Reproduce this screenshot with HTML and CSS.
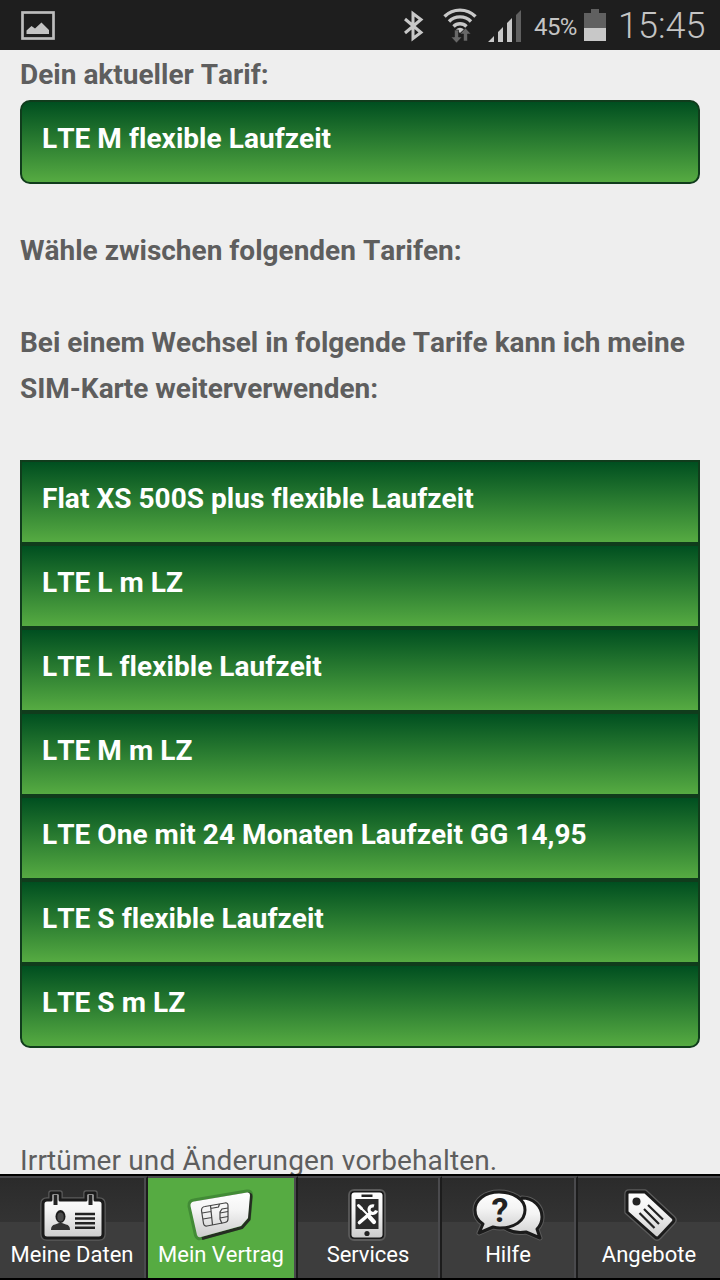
FILE: index.html
```html
<!DOCTYPE html>
<html lang="de">
<head>
    <meta charset="UTF-8">
    <meta name="viewport" content="width=device-width, initial-scale=1.0">
    <title>Mein Vertrag</title>
    <link rel="stylesheet" href="styles.css">
</head>
<body>

    <header class="statusbar">
        <svg class="gallery" width="34" height="29" viewBox="0 0 34 29">
            <rect x="1.5" y="1.5" width="31" height="26" fill="none" stroke="#bdbdbd" stroke-width="2.700"/>
            <path d="M5.500 23v-3.500l5-4.500 3.500 2.500 6.500-6L28 19v4z" fill="#c4c4c4"/>
        </svg>
        <svg class="bluetooth" width="20" height="30" viewBox="0 0 20 30">
            <path d="M1 8l16 13.500-8 6V2.500l8 6L1 22" fill="none" stroke="#c8c8c8" stroke-width="3"/>
        </svg>
        <svg class="wifi" width="34" height="36" viewBox="0 0 34 36">
            <g fill="none" stroke="#c8c8c8" stroke-width="3.400">
                <path d="M1.500 8.500a22 22 0 0 1 31 0"/>
                <path d="M6 13.500a15.500 15.500 0 0 1 22 0"/>
                <path d="M10.500 18.500a9.200 9.200 0 0 1 13 0"/>
            </g>
            <path d="M13 21.500a5.500 5.500 0 0 1 8 0L17 25z" fill="#c8c8c8"/>
            <path d="M11.500 22h4v7h3.500l-5.500 6-5.500-6h3.500z M20.500 33v-7H17l5.500-6 5.500 6h-3.500v7z" fill="#686868" stroke="#1e1e1e" stroke-width="0.600"/>
        </svg>
        <svg class="signal" width="34" height="33" viewBox="0 0 34 33">
            <path d="M0 32l6-6v6z M10 32V22l5-5v15z M19 32V13l5-5v24z" fill="#c8c8c8"/>
            <path d="M28 32V5l5-5v32z" fill="#606060"/>
        </svg>
        <span class="percent">45%</span>
        <svg class="battery" width="22" height="32" viewBox="0 0 22 32">
            <path d="M0 19V4h7V0h8v4h7v15z" fill="#606060"/>
            <rect y="19" width="22" height="13" fill="#c8c8c8"/>
        </svg>
        <span class="clock">15:45</span>
    </header>

    <main class="content">
        <p class="label">Dein aktueller Tarif:</p>
        <div class="tarif current">LTE M flexible Laufzeit</div>

        <p class="label choose">Wähle zwischen folgenden Tarifen:</p>
        <p class="label simcard">Bei einem Wechsel in folgende Tarife kann ich meine SIM-Karte weiterverwenden:</p>

        <ul class="tarife">
            <li class="tarif">Flat XS 500S plus flexible Laufzeit</li>
            <li class="tarif">LTE L m LZ</li>
            <li class="tarif">LTE L flexible Laufzeit</li>
            <li class="tarif">LTE M m LZ</li>
            <li class="tarif">LTE One mit 24 Monaten Laufzeit GG 14,95</li>
            <li class="tarif">LTE S flexible Laufzeit</li>
            <li class="tarif">LTE S m LZ</li>
        </ul>

        <p class="note">Irrtümer und Änderungen vorbehalten.</p>
    </main>

    <nav class="tabs">
        <a class="tab">
            <svg class="card" width="72" height="56" viewBox="0 0 72 56">
                <defs>
                    <linearGradient id="silver" x1="0" y1="0" x2="0" y2="1">
                        <stop offset="0" stop-color="#ffffff"/>
                        <stop offset="0.400" stop-color="#f4f4f4"/>
                        <stop offset="1" stop-color="#cccccc"/>
                    </linearGradient>
                </defs>
                <path d="M8 12h4V5h9v7h26V5h9v7h4q4 0 4 4v30q0 4-4 4H8q-4 0-4-4V16q0-4 4-4z" fill="none" stroke="#5b5b5b" stroke-width="5.500" stroke-linejoin="round"/>
                <path d="M8 12h4V5h9v7h26V5h9v7h4q4 0 4 4v30q0 4-4 4H8q-4 0-4-4V16q0-4 4-4z" fill="url(#silver)" stroke="#1b1b1b" stroke-width="3"  stroke-linejoin="round"/>
                <path d="M14.500 7h4v10h-4z M49.500 7h4v10h-4z" fill="#222"/>
                <ellipse cx="21.500" cy="28.500" rx="5" ry="6.500" fill="#1b1b1b"/>
                <ellipse cx="21.500" cy="29" rx="3.200" ry="4.600" fill="#4a4a4a"/>
                <path d="M12 42q0-5 4-5.500l4-1.500h3l4 1.500q4 .5 4 5.500z" fill="#333"/>
                <path d="M36 26h20M36 30.500h20M36 35.200h20M36 39.800h20" stroke="#222" stroke-width="2.400"/>
            </svg>
            Meine Daten
        </a>
        <a class="tab active">
            <svg class="sim" width="72" height="56" viewBox="0 0 72 56">
                <path d="M8 13.500L61 4.500q3-.5 3 2.500l-2 23-7 8-40 11q-3 1-4-2L4.500 18q-.5-4 3.500-4.500z" fill="none" stroke="#428b36" stroke-width="6" stroke-linejoin="round"/>
                <path d="M9 15L62 6q3-.5 3 2.500l-2 23-7 8-40 11" fill="none" stroke="#252d22" stroke-width="3" stroke-linejoin="round"/>
                <path d="M8 13.500L61 4.500q3-.5 3 2.500l-2 23-7 8-40 11q-3 1-4-2L4.500 18q-.5-4 3.500-4.500z" fill="url(#silver)"/>
                <g fill="none" stroke="#444" stroke-width="1.200">
                    <path d="M19 18.500l20-3.500q3-.5 3 2.500V31q0 3-3 3.500L21 38q-3 .5-3.500-2.500l-2-13q0-3.500 3.500-4z"/>
                    <path d="M16 25l9-1.500M17 31l9-1.500M24.500 17.500l2 19.500M24.500 20.500l8-1.500 1-3M34 25l8-1.500M34 30l8-1.500M42 20l-6 1-2 3v7l2 4.500"/>
                </g>
            </svg>
            Mein Vertrag
        </a>
        <a class="tab">
            <svg class="phone" width="72" height="56" viewBox="0 0 72 56">
                <rect x="18" y="2" width="36" height="50" rx="5" fill="#1b1b1b" stroke="#5b5b5b" stroke-width="1.800"/>
                <rect x="20.500" y="4.500" width="31" height="45" rx="3" fill="url(#silver)"/>
                <path d="M30.500 6.500h11v2.500h-11z" fill="#222"/>
                <path d="M24.500 11h23v30h-23z" fill="#2b2b2b"/>
                <circle cx="36" cy="45.500" r="2.600" fill="#222"/>
                <g stroke="#fff" stroke-linecap="round" fill="none">
                    <path d="M28 18l10 10" stroke-width="2"/>
                    <path d="M27.500 17.500l3 3" stroke-width="3"/>
                    <path d="M38.500 29l4.500 5" stroke-width="4.200"/>
                    <path d="M28.500 34.500L39.500 25" stroke-width="3.600"/>
                    <path d="M43 18a3.800 3.800 0 1 0 2.500 4.500" stroke-width="3.200" stroke-linecap="butt"/>
                </g>
            </svg>
            Services
        </a>
        <a class="tab">
            <svg class="bubbles" width="72" height="56" viewBox="0 0 72 56">
                <g stroke-linejoin="round">
                    <path d="M49 10c11 0 20 8 20 19q0 7-5 12l3 9-14-6q-12 2-21-4z" fill="#5b5b5b" stroke="#5b5b5b" stroke-width="5"/>
                    <path d="M26 4C12 4 2 12 2 22q0 9 8 14l-4 9 14-6q4 1 7 1c14 0 25-7 25-18S40 4 26 4z" fill="#5b5b5b" stroke="#5b5b5b" stroke-width="5"/>
                    <path d="M49 10c11 0 20 8 20 19q0 7-5 12l3 9-14-6q-12 2-21-4z" fill="url(#silver)" stroke="#1b1b1b" stroke-width="3"/>
                    <path d="M26 4C12 4 2 12 2 22q0 9 8 14l-4 9 14-6q4 1 7 1c14 0 25-7 25-18S40 4 26 4z" fill="url(#silver)" stroke="#1b1b1b" stroke-width="3"/>
                </g>
                <text class="question" x="27" y="34" text-anchor="middle">?</text>
            </svg>
            Hilfe
        </a>
        <a class="tab">
            <svg class="pricetag" width="72" height="56" viewBox="0 0 72 56">
                <path d="M14 4h16l28 26q2 2 0 4L44 49q-2 2-4 0L12 24V6q0-2 2-2z" fill="#5b5b5b" stroke="#5b5b5b" stroke-width="5.500" stroke-linejoin="round"/>
                <path d="M14 4h16l28 26q2 2 0 4L44 49q-2 2-4 0L12 24V6q0-2 2-2z" fill="url(#silver)" stroke="#1b1b1b" stroke-width="3" stroke-linejoin="round"/>
                <circle cx="21.500" cy="13.500" r="4" fill="#222"/>
                <path d="M24.500 25l15 15M29 21l15 15M33 17l15 14.500" stroke="#222" stroke-width="2.200"/>
            </svg>
            Angebote
        </a>
    </nav>

</body>
</html>
```
FILE: styles.css
```css
* { box-sizing: border-box; }
body {
    margin: 0;
    height: 1280px;
    display: flex;
    flex-direction: column;
    overflow: hidden;
    background: #eee;
    color: #5e5e5e;
    font-family: Roboto, "Liberation Sans", sans-serif;
    font-size: 28px;
    font-kerning: none;
    font-variant-ligatures: none;
    line-height: 46px;
}
p, ul { margin: 0; padding: 0; }
svg { display: block; flex: none; overflow: visible; }

.statusbar {
    flex: none;
    height: 50px;
    display: flex;
    align-items: flex-start;
    padding: 0 14px 0 21px;
    background: #1e1e1e;
    color: #c4c4c4;
}
.gallery { margin-top: 11px; }
.bluetooth { margin: 11px 0 0 auto; }
.wifi { margin: 8px 0 0 19px; }
.signal { margin: 10px 0 0 11px; }
.percent { margin-left: 12px; font-size: 24px; line-height: 54px; width: 44px; letter-spacing: -0.6px; }
.battery { margin: 9px 0 0 6px; }
.clock { width: 88px; margin-left: 12px; font-size: 36px; font-weight: 300; line-height: 53px; white-space: nowrap; }

.content { flex: 1; min-height: 0; overflow: hidden; padding: 2px 20px 0; }
.label { font-weight: bold; }
.choose { margin-top: 44px; }
.simcard { margin-top: 46px; letter-spacing: -0.03px; }
.tarife { margin-top: 48px; list-style: none; }
.tarif {
    height: 84px;
    padding: 14px 20px;
    border: 2px solid #103c1c;
    background: linear-gradient(#004f20, #56ab42);
    color: #fff;
    font-weight: bold;
    letter-spacing: 0.04px;
}
.current { margin-top: 2px; border-radius: 10px; }
.tarife .tarif:last-child { border-radius: 0 0 10px 10px; }
.note { margin-top: 90px; letter-spacing: 0.14px; }

.tabs {
    flex: none;
    height: 106px;
    display: grid;
    grid-template-columns: 148px 150px 144px 136px 142px;
    border-top: 2px solid #000;
    border-bottom: 2px solid #000;
}
.tab {
    display: flex;
    flex-direction: column;
    align-items: center;
    padding: 10px 2px 0 0;
    border-top: 2px solid #4a4a4d;
    border-right: 2px solid #1c1c1c;
    background: linear-gradient(#2b2b2b, #333 44px, #3d3d3d 44px);
    box-shadow: inset -2px 0 #4a4a4d;
    color: #fff;
    font-size: 22px;
    line-height: 22px;
    white-space: nowrap;
}
.tab:last-child { padding-right: 0; border-right: 0; box-shadow: none; }
.active { background: #56ab42; }
.card { margin-left: 5px; }
.sim { margin-left: 2px; }
.phone { margin-left: -2px; }
.bubbles { margin-left: 2px; }
.pricetag { margin-left: 3px; }
.question { font-size: 34px; font-weight: bold; fill: #222; }
```
